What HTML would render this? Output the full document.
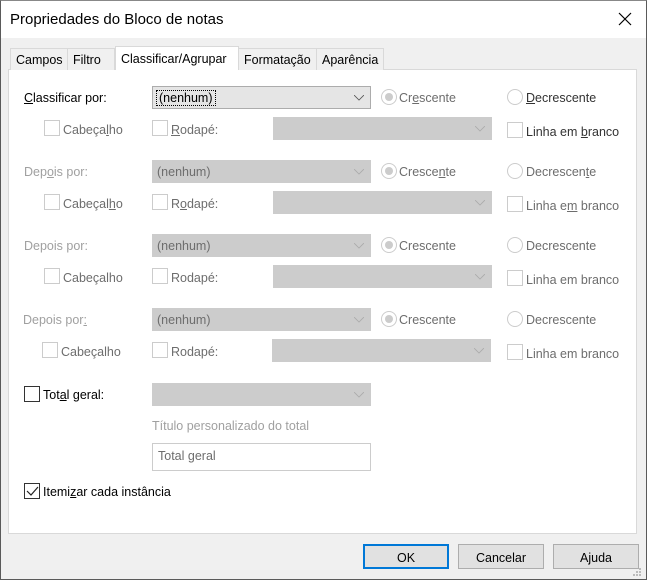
<!DOCTYPE html>
<html><head><meta charset="utf-8"><style>
*{box-sizing:border-box;margin:0;padding:0}
body{width:647px;height:580px;background:#f0f0f0;font-family:"Liberation Sans",sans-serif;font-size:12px;color:#000;position:relative;overflow:hidden}
.a{position:absolute}
.win{left:0;top:0;width:647px;height:580px;border:1px solid #5a5a5a;border-top-color:#888}
.title{left:1px;top:1px;width:645px;height:37px;background:#fff}
.tab{position:absolute;top:48px;height:22px;background:#f0f0f0;border:1px solid #d9d9d9;border-bottom:none;padding:4px 0 0 5px;font-size:12.5px}
.panel{left:8px;top:69px;width:629px;height:465px;background:#fff;border:1px solid #d9d9d9}
.dd{position:absolute;height:23px;background:#cccccc;border:1px solid #cccccc;color:#6d6d6d;padding:4px 0 0 4px;font-size:12.5px}
.dd svg{position:absolute;right:6px;top:8px}
.cb{position:absolute;width:16px;height:16px;border:1px solid #cccccc;background:#fff}
.rd{position:absolute;width:16px;height:16px;border:1px solid #cccccc;border-radius:50%;background:#fff}
.rd.on::after{content:"";position:absolute;left:3px;top:3px;width:8px;height:8px;border-radius:50%;background:#cccccc}
.t{position:absolute;font-size:12.5px;white-space:nowrap;margin-top:1px}
.g{color:#6d6d6d}
.d{color:#a0a0a0}
.btn{position:absolute;top:544px;width:86px;height:25px;background:#e1e1e1;border:1px solid #adadad;text-align:center;padding-top:6px;font-size:12.5px}
u{text-decoration:underline}
</style></head><body>
<div class="a win"></div>
<div class="a title"></div>
<div class="t" style="left:10px;top:10px;font-size:15px">Propriedades do Bloco de notas</div>
<svg class="a" style="left:618px;top:12px" width="14" height="14"><path d="M1 1L13 13M13 1L1 13" stroke="#000" stroke-width="1.2"/></svg>

<div class="a panel"></div>
<div class="tab" style="left:10px;width:58px">Campos</div>
<div class="tab" style="left:67px;width:48px">Filtro</div>
<div class="tab" style="left:115px;top:46px;height:24px;width:124px;background:#fff;padding-top:5px">Classificar/Agrupar</div>
<div class="tab" style="left:238px;width:79px">Formatação</div>
<div class="tab" style="left:316px;width:68px">Aparência</div>
<div class="a" style="left:116px;top:68px;width:122px;height:3px;background:#fff"></div>

<!-- group 1 -->
<div class="t" style="left:24px;top:90px"><u>C</u>lassificar por:</div>
<div class="dd" style="left:152px;top:86px;width:219px;background:#e5e5e5;border-color:#acacac;color:#000"><span style="outline:1px dotted #000;padding:0 2px">(nenhum)</span><svg width="10" height="6"><path d="M0 0L5 5L10 0" fill="none" stroke="#555" stroke-width="0.8"/></svg></div>
<div class="rd on" style="left:381px;top:89px"></div><div class="t g" style="left:399px;top:90px">Cr<u>e</u>scente</div>
<div class="rd" style="left:507px;top:89px"></div><div class="t" style="left:526px;top:90px;color:#333"><u>D</u>ecrescente</div>
<div class="cb" style="left:44px;top:120px"></div><div class="t g" style="left:63px;top:122px">Cabeça<u>l</u>ho</div>
<div class="cb" style="left:152px;top:120px"></div><div class="t g" style="left:171px;top:122px"><u>R</u>odapé:</div>
<div class="dd" style="left:273px;top:117px;width:219px"><svg width="10" height="6"><path d="M0 0L5 5L10 0" fill="none" stroke="#aaa" stroke-width="0.8"/></svg></div>
<div class="cb" style="left:507px;top:122px"></div><div class="t" style="left:526px;top:124px;color:#333">Linha em <u>b</u>ranco</div>

<!-- group 2 -->
<div class="t d" style="left:24px;top:164px">Dep<u>o</u>is por:</div>
<div class="dd" style="left:152px;top:160px;width:219px">(nenhum)<svg width="10" height="6"><path d="M0 0L5 5L10 0" fill="none" stroke="#aaa" stroke-width="0.8"/></svg></div>
<div class="rd on" style="left:381px;top:163px"></div><div class="t g" style="left:399px;top:164px">Cresce<u>n</u>te</div>
<div class="rd" style="left:507px;top:163px"></div><div class="t g" style="left:526px;top:164px">Decrescen<u>t</u>e</div>
<div class="cb" style="left:44px;top:194px"></div><div class="t g" style="left:63px;top:196px">Cabeçal<u>h</u>o</div>
<div class="cb" style="left:152px;top:194px"></div><div class="t g" style="left:171px;top:196px">R<u>o</u>dapé:</div>
<div class="dd" style="left:273px;top:191px;width:219px"><svg width="10" height="6"><path d="M0 0L5 5L10 0" fill="none" stroke="#aaa" stroke-width="0.8"/></svg></div>
<div class="cb" style="left:507px;top:196px"></div><div class="t g" style="left:526px;top:198px">Linha e<u>m</u> branco</div>

<!-- group 3 -->
<div class="t d" style="left:24px;top:238px">Depois por:</div>
<div class="dd" style="left:152px;top:234px;width:219px">(nenhum)<svg width="10" height="6"><path d="M0 0L5 5L10 0" fill="none" stroke="#aaa" stroke-width="0.8"/></svg></div>
<div class="rd on" style="left:381px;top:237px"></div><div class="t g" style="left:399px;top:238px">Crescente</div>
<div class="rd" style="left:507px;top:237px"></div><div class="t g" style="left:526px;top:238px">Decrescente</div>
<div class="cb" style="left:44px;top:268px"></div><div class="t g" style="left:63px;top:270px">Cabeçalho</div>
<div class="cb" style="left:152px;top:268px"></div><div class="t g" style="left:171px;top:270px">Rodapé:</div>
<div class="dd" style="left:273px;top:265px;width:219px"><svg width="10" height="6"><path d="M0 0L5 5L10 0" fill="none" stroke="#aaa" stroke-width="0.8"/></svg></div>
<div class="cb" style="left:507px;top:270px"></div><div class="t g" style="left:526px;top:272px">Linha em branco</div>

<!-- group 4 -->
<div class="t d" style="left:23px;top:312px">Depois por<u>:</u></div>
<div class="dd" style="left:152px;top:308px;width:219px">(nenhum)<svg width="10" height="6"><path d="M0 0L5 5L10 0" fill="none" stroke="#aaa" stroke-width="0.8"/></svg></div>
<div class="rd on" style="left:381px;top:311px"></div><div class="t g" style="left:399px;top:312px">Crescente</div>
<div class="rd" style="left:507px;top:311px"></div><div class="t g" style="left:526px;top:312px">Decrescente</div>
<div class="cb" style="left:42px;top:342px"></div><div class="t g" style="left:61px;top:344px">Cabeçalho</div>
<div class="cb" style="left:152px;top:342px"></div><div class="t g" style="left:171px;top:344px">Rodapé:</div>
<div class="dd" style="left:272px;top:339px;width:219px"><svg width="10" height="6"><path d="M0 0L5 5L10 0" fill="none" stroke="#aaa" stroke-width="0.8"/></svg></div>
<div class="cb" style="left:507px;top:344px"></div><div class="t g" style="left:526px;top:346px">Linha em branco</div>

<!-- totals -->
<div class="cb" style="left:24px;top:386px;border-color:#333"></div><div class="t" style="left:43px;top:387px">Tot<u>a</u>l geral:</div>
<div class="dd" style="left:152px;top:383px;width:219px"><svg width="10" height="6"><path d="M0 0L5 5L10 0" fill="none" stroke="#aaa" stroke-width="0.8"/></svg></div>
<div class="t d" style="left:152px;top:418px">Título personalizado do total</div>
<div class="a" style="left:152px;top:443px;width:219px;height:28px;border:1px solid #ccc;background:#fff"></div>
<div class="t g" style="left:158px;top:448px">Total geral</div>
<div class="cb" style="left:24px;top:483px;border-color:#333"><svg class="a" style="left:1px;top:2px" width="13" height="11"><path d="M1 5L5 9L12 1" fill="none" stroke="#222" stroke-width="1.2"/></svg></div>
<div class="t" style="left:43px;top:484px">Itemi<u>z</u>ar cada instância</div>

<div class="btn" style="left:363px;border:2px solid #0078d7;padding-top:5px">OK</div>
<div class="btn" style="left:458px">Cancelar</div>
<div class="btn" style="left:553px">Ajuda</div>
<svg class="a" style="left:633px;top:568px" width="10" height="10"><g fill="#bbb"><rect x="6" y="0" width="2" height="2"/><rect x="3" y="3" width="2" height="2"/><rect x="6" y="3" width="2" height="2"/><rect x="0" y="6" width="2" height="2"/><rect x="3" y="6" width="2" height="2"/><rect x="6" y="6" width="2" height="2"/></g></svg>
</body></html>
